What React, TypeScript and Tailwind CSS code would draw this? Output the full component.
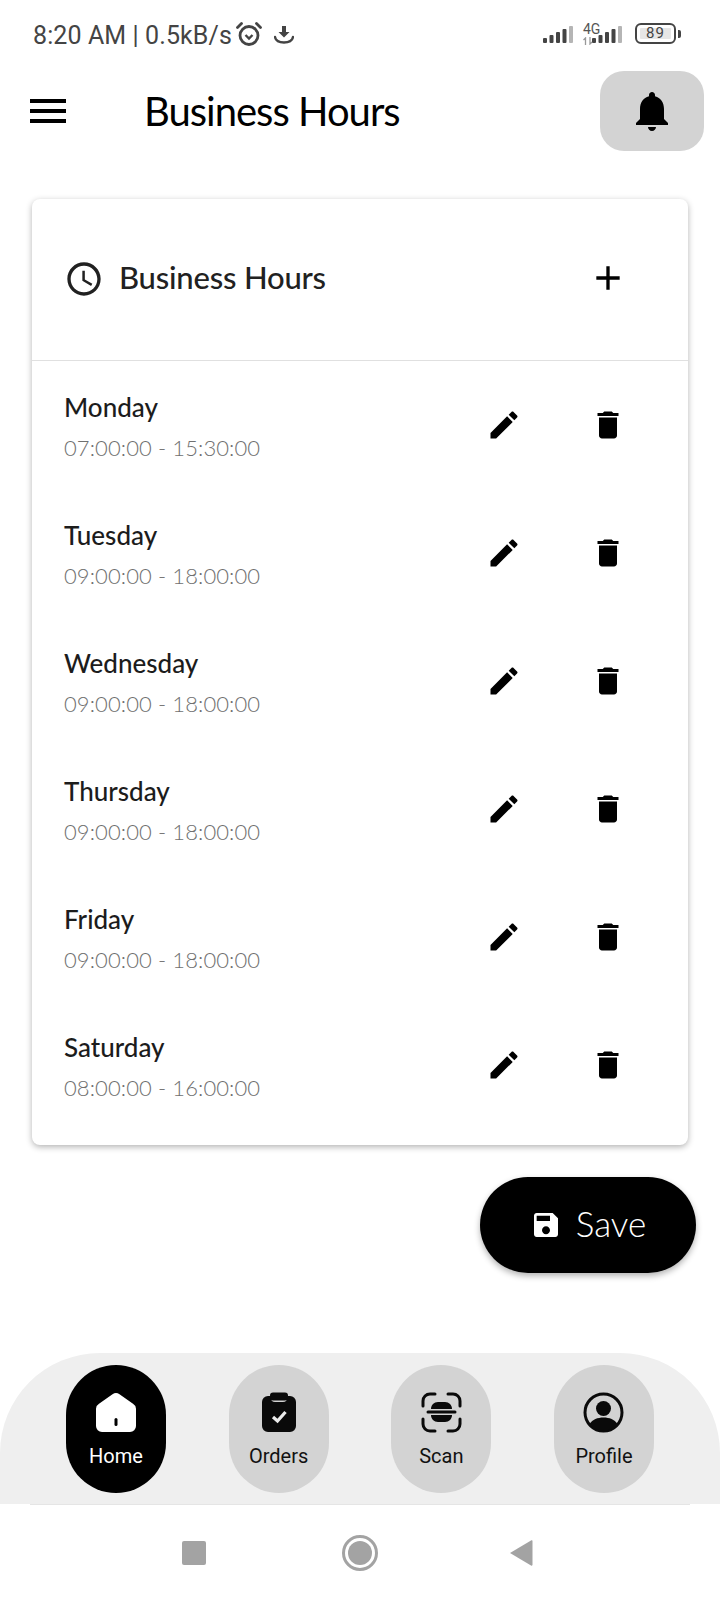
const days = [
  { name: "Monday", hours: "07:00:00 - 15:30:00" },
  { name: "Tuesday", hours: "09:00:00 - 18:00:00" },
  { name: "Wednesday", hours: "09:00:00 - 18:00:00" },
  { name: "Thursday", hours: "09:00:00 - 18:00:00" },
  { name: "Friday", hours: "09:00:00 - 18:00:00" },
  { name: "Saturday", hours: "08:00:00 - 16:00:00" },
]

function Icon({ d, size, className }: { d: string; size: number; className?: string }) {
  return (
    <svg width={size} height={size} viewBox="0 0 24 24" fill="currentColor" className={className}>
      <path d={d} />
    </svg>
  )
}

const editPath = "M3 17.25V21h3.75L17.81 9.94l-3.75-3.75L3 17.25zM20.71 7.04c.39-.39.39-1.02 0-1.41l-2.34-2.34c-.39-.39-1.02-.39-1.41 0l-1.83 1.83 3.75 3.75 1.83-1.83z"
const trashPath = "M6 19c0 1.1.9 2 2 2h8c1.1 0 2-.9 2-2V7H6v12zM19 4h-3.5l-1-1h-5l-1 1H5v2h14V4z"
const clockPath = "M11.99 2C6.47 2 2 6.48 2 12s4.47 10 9.99 10C17.52 22 22 17.52 22 12S17.52 2 11.99 2zM12 20c-4.42 0-8-3.58-8-8s3.58-8 8-8 8 3.58 8 8-3.58 8-8 8zM12.5 7H11v6l5.25 3.15.75-1.23-4.5-2.67z"
const savePath = "M17 3H5c-1.11 0-2 .9-2 2v14c0 1.1.89 2 2 2h14c1.1 0 2-.9 2-2V7l-4-4zm-5 16c-1.66 0-3-1.34-3-3s1.34-3 3-3 3 1.34 3 3-1.34 3-3 3zm3-10H5V5h10v4z"
const bellPath = "M12 22c1.1 0 2-.9 2-2h-4c0 1.1.89 2 2 2zm6-6v-5c0-3.07-1.64-5.64-4.5-6.32V4c0-.83-.67-1.5-1.5-1.5s-1.5.67-1.5 1.5v.68C7.63 5.36 6 7.92 6 11v5l-2 2v1h16v-1l-2-2z"
const plusPath = "M19 13h-6v6h-2v-6H5v-2h6V5h2v6h6v2z"

function SignalBars() {
  return (
    <svg width="32" height="20" viewBox="0 0 32 20">
      <rect x="0" y="13" width="4" height="5" rx="1" fill="#444" />
      <rect x="6.500" y="10" width="4" height="8" rx="1" fill="#444" />
      <rect x="13" y="7" width="4" height="11" rx="1" fill="#444" />
      <rect x="19.500" y="4" width="4" height="14" rx="1" fill="#444" />
      <rect x="26" y="1" width="4" height="17" rx="1" fill="#b5b5b5" />
    </svg>
  )
}

function StatusBar() {
  return (
    <div className="h-[70px] flex items-start pl-[33px] pr-[39px] pt-[20px] text-[#444444] font-['Roboto',sans-serif]">
      <span className="text-[25px] leading-[32px] tracking-[0.1px] whitespace-nowrap">8:20 AM | 0.5kB/s</span>
      <svg width="28" height="28" viewBox="0 0 28 28" className="ml-[3px]" fill="none" stroke="#444" strokeWidth="2.800">
        <circle cx="14" cy="15.500" r="9" />
        <path d="M10.500 15l3.500 3.500 3.500-3.500" strokeWidth="2.400" />
        <path d="M2.500 7.500l4-4M25.500 7.500l-4-4" strokeLinecap="round" />
      </svg>
      <svg width="20" height="18" viewBox="0 0 20 18" className="ml-[11px] mt-[6px]" fill="#444">
        <path d="M8 0h4v6h3.500L10 11.500 4.500 6H8z" />
        <path d="M1 11c.5 3.500 4 5.500 9 5.500s8.500-2 9-5.500" fill="none" stroke="#444" strokeWidth="2.400" strokeLinecap="round" />
      </svg>
      <div className="ml-auto flex items-start">
        <div className="mt-[5px]">
          <SignalBars />
        </div>
        <div className="relative w-[41px] h-[28px] ml-[8px]">
          <span className="absolute left-0 top-[2px] text-[14px] leading-[14px] text-[#555555]">4G</span>
          <svg width="10" height="8" viewBox="0 0 10 8" className="absolute left-0 top-[17px]">
            <path d="M2.500 8V1L0.500 3M7 0v7l2-2" fill="none" stroke="#999" strokeWidth="1.300" />
          </svg>
          <div className="absolute left-[9px] top-[5px]">
            <SignalBars />
          </div>
        </div>
        <div className="relative ml-[11px] mt-[3px] w-[41px] h-[21px] border-[2.500px] border-[#444444] rounded-[6px] flex items-center justify-center">
          <div className="absolute left-[3px] top-[3px] bottom-[3px] right-[3px] bg-[#e6e6e6] rounded-[1px]" />
          <span className="relative text-[15px] leading-none tracking-[1px] text-[#444444]">89</span>
        </div>
        <div className="w-[3px] h-[8px] bg-[#444444] rounded-r-[2px] mt-[10px] ml-[2px]" />
      </div>
    </div>
  )
}

function Header() {
  return (
    <div className="h-[82px] flex items-center pl-[30px] pr-[16px]">
      <div className="w-[36px] flex flex-col gap-[6px]">
        <div className="h-[4px] bg-black" />
        <div className="h-[4px] bg-black" />
        <div className="h-[4px] bg-black" />
      </div>
      <h1 className="ml-[78px] text-[40px] leading-[48px] text-black font-normal tracking-[-1px] font-['Lato',sans-serif]">
        Business Hours
      </h1>
      <button className="ml-auto w-[104px] h-[80px] rounded-[24px] bg-[#d3d3d3] flex items-center justify-center text-black">
        <Icon d={bellPath} size={48} />
      </button>
    </div>
  )
}

function DayRow({ name, hours }: { name: string; hours: string }) {
  return (
    <div className="h-[128px] flex items-center pl-[32px] pr-[62px]">
      <div className="flex-1 mb-[2px]">
        <p className="text-[26px] leading-[36px] font-medium text-[#1c1c1c] font-['Lato',sans-serif]">{name}</p>
        <p className="mt-[7px] text-[22px] leading-[32px] tracking-[0.1px] font-light text-[#707070] font-['Lato',sans-serif]">{hours}</p>
      </div>
      <div className="flex items-center gap-[68px] mb-[4px] text-black">
        <Icon d={editPath} size={36} />
        <Icon d={trashPath} size={36} />
      </div>
    </div>
  )
}

function Card() {
  return (
    <div className="mx-[32px] mt-[47px] bg-white rounded-[8px] shadow-[0_2px_6px_rgba(0,0,0,0.3)] pb-[14px]">
      <div className="h-[162px] pb-[2px] border-b border-[#e0e0e0] flex items-center pl-[32px] pr-[60px] text-[#212121]">
        <Icon d={clockPath} size={40} />
        <span className="ml-[15px] mb-[4px] text-[31px] leading-[40px] font-medium tracking-[-0.2px] font-['Lato',sans-serif]">Business Hours</span>
        <Icon d={plusPath} size={40} className="ml-auto mb-[2px] text-black" />
      </div>
      <div className="pt-[2px]">
        {days.map((day) => (
          <DayRow key={day.name} name={day.name} hours={day.hours} />
        ))}
      </div>
    </div>
  )
}

function NavItem({ label, active, children }: { label: string; active?: boolean; children: React.ReactNode }) {
  return (
    <div className={`w-[100px] h-[128px] rounded-[50px] flex flex-col items-center pt-[27px] font-['Roboto',sans-serif] ${active ? "bg-black text-white" : "bg-[#d3d3d3] text-[#111111]"}`}>
      <div className="h-[40px] flex items-center justify-center">{children}</div>
      <span className="mt-[10px] text-[20px] leading-[28px] font-normal">{label}</span>
    </div>
  )
}

function BottomNav() {
  return (
    <div className="mt-auto h-[151px] bg-[#efefef] rounded-t-[100px] pt-[12px] px-[66px] flex justify-between">
      <NavItem label="Home" active>
        <svg width="42" height="42" viewBox="0 0 42 42" className="mt-[1px]">
          <path d="M17.500 2.200a6 6 0 0 1 7 0l13.500 9.500a6 6 0 0 1 3 5V34a6 6 0 0 1-6 6H7a6 6 0 0 1-6-6V16.700a6 6 0 0 1 3-5z" fill="#fff" />
          <rect x="19.500" y="26" width="3" height="8" rx="1.500" fill="#000" />
        </svg>
      </NavItem>
      <NavItem label="Orders">
        <svg width="36" height="41" viewBox="0 0 36 41">
          <path d="M10 4H7a6 6 0 0 0-6 6v24a6 6 0 0 0 6 6h22a6 6 0 0 0 6-6V10a6 6 0 0 0-6-6h-3v2a4 4 0 0 1-4 4h-8a4 4 0 0 1-4-4z" fill="#0a0a0a" />
          <rect x="9" y="0.500" width="18" height="8" rx="3" fill="#0a0a0a" />
          <path d="M12 25l4.500 4L24.500 20" fill="none" stroke="#ececec" strokeWidth="3.200" />
        </svg>
      </NavItem>
      <NavItem label="Scan">
        <svg width="41" height="41" viewBox="0 0 41 41" fill="none" stroke="#0a0a0a" strokeWidth="3" strokeLinecap="round">
          <path d="M14 2H9a7 7 0 0 0-7 7v5M27 2h5a7 7 0 0 1 7 7v5M14 39H9a7 7 0 0 1-7-7v-5M27 39h5a7 7 0 0 0 7-7v-5" />
          <path d="M7 20h27" />
          <path d="M10 17c0-4 3-7 7-7h7c4 0 7 3 7 7z" fill="#0a0a0a" stroke="none" />
          <path d="M10 23h21c0 4-3 7-7 7h-7c-4 0-7-3-7-7z" fill="#0a0a0a" stroke="none" />
        </svg>
      </NavItem>
      <NavItem label="Profile">
        <svg width="41" height="41" viewBox="0 0 41 41">
          <circle cx="20.500" cy="20.500" r="18.500" fill="none" stroke="#0a0a0a" strokeWidth="3" />
          <circle cx="20.500" cy="16.500" r="7.500" fill="#0a0a0a" />
          <path d="M6.500 32c3-4.500 8-6.500 14-6.500s11 2 14 6.500c-3.500 4-8.500 7-14 7s-10.500-3-14-7z" fill="#0a0a0a" />
        </svg>
      </NavItem>
    </div>
  )
}

function SystemNav() {
  return (
    <div className="h-[96px] mx-[30px] border-t border-[#e5e5e5] flex items-center pl-[152px]">
      <div className="w-[24px] h-[24px] bg-[#a3a3a3] rounded-[2px]" />
      <div className="ml-[136px] w-[36px] h-[36px] rounded-full border-[3px] border-[#a3a3a3] flex items-center justify-center">
        <div className="w-[24px] h-[24px] rounded-full bg-[#a3a3a3]" />
      </div>
      <svg width="24" height="28" viewBox="0 0 24 28" className="ml-[131px]">
        <path d="M22 1.500c1 -.5 1.500 0 1.500 1v23c0 1-.5 1.500-1.500 1L1 14z" fill="#a3a3a3" />
      </svg>
    </div>
  )
}

export default function App() {
  return (
    <div className="w-[720px] h-[1600px] bg-white flex flex-col overflow-hidden">
      <StatusBar />
      <Header />
      <Card />
      <div className="mt-[32px] pr-[24px] flex justify-end">
        <button className="w-[216px] h-[96px] rounded-[48px] bg-black text-white flex items-center justify-center gap-[14px] shadow-[0_3px_6px_rgba(0,0,0,0.3)]">
          <Icon d={savePath} size={32} />
          <span className="mb-[4px] text-[35px] leading-[40px] font-light font-['Lato',sans-serif]">Save</span>
        </button>
      </div>
      <BottomNav />
      <SystemNav />
    </div>
  )
}
